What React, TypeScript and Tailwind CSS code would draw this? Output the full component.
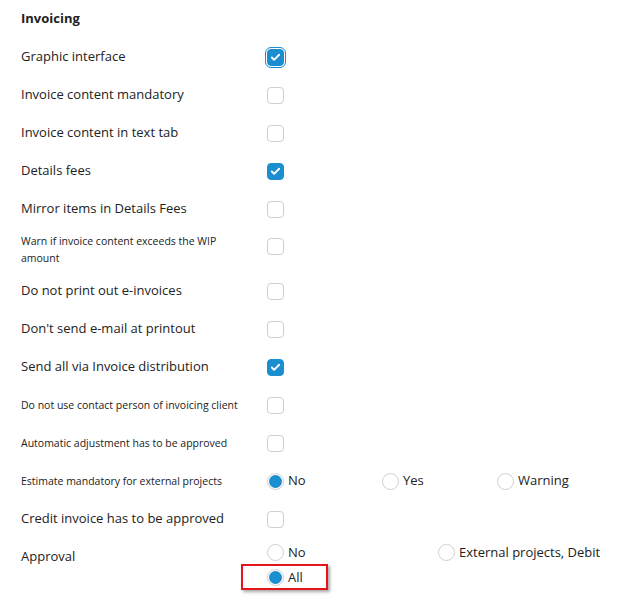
import { Check } from 'lucide-react'

type Row =
  | { label: string; small?: boolean; kind: 'check'; checked?: boolean; focused?: boolean }
  | { label: string; small?: boolean; kind: 'radio3' }

const rows: Row[] = [
  { label: 'Graphic interface', kind: 'check', checked: true, focused: true },
  { label: 'Invoice content mandatory', kind: 'check' },
  { label: 'Invoice content in text tab', kind: 'check' },
  { label: 'Details fees', kind: 'check', checked: true },
  { label: 'Mirror items in Details Fees', kind: 'check' },
  { label: 'Warn if invoice content exceeds the WIP amount', small: true, kind: 'check' },
  { label: 'Do not print out e-invoices', kind: 'check' },
  { label: "Don't send e-mail at printout", kind: 'check' },
  { label: 'Send all via Invoice distribution', kind: 'check', checked: true },
  { label: 'Do not use contact person of invoicing client', small: true, kind: 'check' },
  { label: 'Automatic adjustment has to be approved', small: true, kind: 'check' },
  { label: 'Estimate mandatory for external projects', small: true, kind: 'radio3' },
  { label: 'Credit invoice has to be approved', kind: 'check' },
]

const Checkbox = ({ checked, focused }: { checked?: boolean; focused?: boolean }) => {
  if (checked) {
    return (
      <span
        className={`flex h-[17px] w-[17px] items-center justify-center rounded-[4px] border border-[#1b8ecf] bg-[#1b8ecf] ${
          focused ? 'outline outline-[1.5px] outline-offset-[1px] outline-[#1b8ecf]' : ''
        }`}
      >
        <Check className="h-[11px] w-[11px] text-white" strokeWidth={4} />
      </span>
    )
  }
  return <span className="block h-[17px] w-[17px] rounded-[4px] border border-[#cfcfcf] bg-white" />
}

const Radio = ({ label, checked }: { label: string; checked?: boolean }) => (
  <span className="flex items-center gap-[4px] text-[13px] text-[#222]">
    <span className="flex h-[17px] w-[17px] items-center justify-center rounded-full border border-[#cfcfcf] bg-white">
      {checked && <span className="block h-[13px] w-[13px] rounded-full bg-[#1b8ecf]" />}
    </span>
    {label}
  </span>
)

export default function App() {
  return (
    <div
      className="min-h-[602px] w-[624px] bg-white px-[21px] text-[#222]"
      style={{ fontFamily: '"Open Sans", "Noto Sans", sans-serif' }}
    >
      <div className="flex h-[38px] items-center pb-[1px] text-[13px] font-bold">Invoicing</div>

      {rows.map((row) => {
        const tall = row.label.startsWith('Warn')
        return (
          <div key={row.label} className={`flex items-center ${tall ? 'h-[44px]' : 'h-[38px]'}`}>
            <div
              className={`w-[246px] shrink-0 pr-4 ${
                row.small ? 'text-[10.5px] leading-[17px]' : 'text-[13px]'
              }`}
            >
              {row.label}
            </div>
            {row.kind === 'check' ? (
              <div className={tall ? 'mb-[7px]' : ''}>
                <Checkbox checked={row.checked} focused={row.focused} />
              </div>
            ) : (
              <div className="grid grid-cols-[115px_115px_115px]">
                <Radio label="No" checked />
                <Radio label="Yes" />
                <Radio label="Warning" />
              </div>
            )}
          </div>
        )
      })}

      <div className="flex items-start pt-[5px]">
        <div className="w-[246px] shrink-0 pt-[4px] text-[13px]">Approval</div>
        <div className="flex flex-col gap-[5px]">
          <div className="grid grid-cols-[171px_auto]">
            <Radio label="No" />
            <Radio label="External projects, Debit" />
          </div>
          <div className="relative">
            <Radio label="All" checked />
            <span className="absolute left-[-26px] top-[-4px] h-[26px] w-[87px] border-2 border-[#e8141b] shadow-[2px_2px_3px_rgba(0,0,0,0.35)]" />
          </div>
        </div>
      </div>
    </div>
  )
}
